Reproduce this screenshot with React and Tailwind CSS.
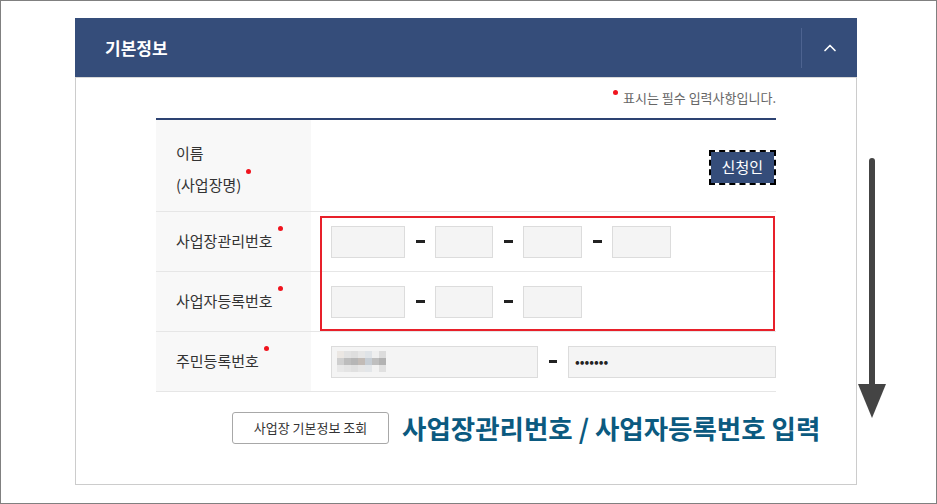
import { ChevronUp } from "lucide-react";

const FONT = { fontFamily: '"Noto Sans CJK KR", "Noto Sans", sans-serif' };

const BLUR = [
  ["#ebe7e3", "#e2e2e2", "#dedede", "#e6e6e6", "#dfe3e7", "#efefef", "#dcdcdc"],
  ["#cfcfcf", "#bdbdbd", "#b6b6b6", "#c2bbb6", "#c6cdd4", "#bfbfbf", "#b2b2b2"],
  ["#e8e8e8", "#e4e4e4", "#e0e0e0", "#e6e6e6", "#e3e6e9", "#f2f2f2", "#e0e0e0"],
];

function Req() {
  return (
    <span className="relative -top-[13px] ml-[5px] inline-block h-[5px] w-[5px] rounded-full bg-[#f0141e]" />
  );
}

function Box({ w }) {
  return <div className={`h-[32px] border border-[#dcdcdc] bg-[#f4f4f4] ${w}`} />;
}

function Dash() {
  return (
    <div className="flex w-[30px] justify-center">
      <div className="h-[3px] w-[9px] bg-[#222]" />
    </div>
  );
}

function Label({ children }) {
  return (
    <div className="flex w-[155px] shrink-0 items-center bg-[#f8f8f8] pl-[20px] text-[15px] text-[#333]">
      <span>{children}</span>
      <Req />
    </div>
  );
}

export default function App() {
  return (
    <div
      className="relative h-[504px] w-[937px] overflow-hidden border border-[#808080] bg-white"
      style={FONT}
    >
      <div className="ml-[74px] mt-[17px] w-[782px]">
        <div className="flex h-[59px] items-center bg-[#354d7a] pl-[30px]">
          <h2 className="flex-1 text-[17px] font-bold text-white">기본정보</h2>
          <div className="h-[40px] w-px bg-[#4d6390]" />
          <div className="flex w-[55px] justify-center">
            <ChevronUp className="h-[20px] w-[20px] text-white" strokeWidth={2} />
          </div>
        </div>

        <div className="border border-t-[#d8d8d8] border-x-[#cccccc] border-b-[#cccccc] px-[80px] pb-[40px]">
          <p className="mt-[11px] flex items-start justify-end text-[13px] leading-[18px] text-[#666]">
            <span className="mr-[5px] mt-[1px] inline-block h-[5px] w-[5px] rounded-full bg-[#f0141e]" />
            표시는 필수 입력사항입니다.
          </p>

          <div className="relative mt-[11px] border-t-2 border-[#2d4372]">
            <div className="flex h-[92px] border-b border-[#e6e6e6]">
              <div className="flex w-[155px] shrink-0 items-center bg-[#f8f8f8] pl-[20px] pt-[6px] text-[15px] leading-[32px] text-[#333]">
                <div>
                  <div>이름</div>
                  <div className="flex items-center">
                    (사업장명)
                    <Req />
                  </div>
                </div>
              </div>
              <div className="flex flex-1 items-center justify-end pt-[4px]">
                <div className="border-2 border-dashed border-black">
                  <button className="flex h-[31px] items-center bg-[#354d7a] px-[11px] text-[15px] text-white">
                    신청인
                  </button>
                </div>
              </div>
            </div>

            <div className="flex h-[60px] border-b border-[#e6e6e6]">
              <Label>사업장관리번호</Label>
              <div className="flex flex-1 items-center pl-[20px]">
                <Box w="w-[74px]" />
                <Dash />
                <Box w="w-[58px]" />
                <Dash />
                <Box w="w-[59px]" />
                <Dash />
                <Box w="w-[59px]" />
              </div>
            </div>

            <div className="flex h-[60px] border-b border-[#e6e6e6]">
              <Label>사업자등록번호</Label>
              <div className="flex flex-1 items-center pl-[20px]">
                <Box w="w-[74px]" />
                <Dash />
                <Box w="w-[58px]" />
                <Dash />
                <Box w="w-[59px]" />
              </div>
            </div>

            <div className="flex h-[60px] border-b border-[#e6e6e6]">
              <Label>주민등록번호</Label>
              <div className="flex flex-1 items-center pl-[20px]">
                <div className="flex h-[32px] w-[207px] items-center border border-[#dcdcdc] bg-[#f4f4f4] pl-[5px]">
                  <div className="grid grid-cols-7">
                    {BLUR.flat().map((c, i) => (
                      <div key={i} className="h-[7px] w-[7px]" style={{ backgroundColor: c }} />
                    ))}
                  </div>
                </div>
                <div className="flex w-[30px] justify-center">
                  <div className="h-[3px] w-[8px] bg-[#222]" />
                </div>
                <div className="flex h-[32px] flex-1 items-center border border-[#dcdcdc] bg-[#f4f4f4] pl-[6px] text-[14px] tracking-[0px] text-[#222]">
                  •••••••
                </div>
              </div>
            </div>

            <div className="absolute left-[164px] top-[96px] h-[115px] w-[455px] border-2 border-[#e8202a]" />
          </div>

          <div className="mt-[20px] flex items-center pl-[76px]">
            <button className="h-[32px] w-[157px] shrink-0 rounded-[3px] border border-[#a8a8a8] bg-white text-[13px] text-[#333]">
              사업장 기본정보 조회
            </button>
            <span className="ml-[13px] whitespace-nowrap text-[26.5px] font-bold leading-none text-[#0b5a80]">
              사업장관리번호 / 사업자등록번호 입력
            </span>
          </div>
        </div>
      </div>

      <svg className="absolute left-[855px] top-[155px]" width="32" height="265" viewBox="0 0 32 265">
        <line x1="16" y1="5" x2="16" y2="232" stroke="#444" strokeWidth="6" strokeLinecap="round" />
        <polygon points="2,228 30,228 16,262" fill="#444" />
      </svg>
    </div>
  );
}
